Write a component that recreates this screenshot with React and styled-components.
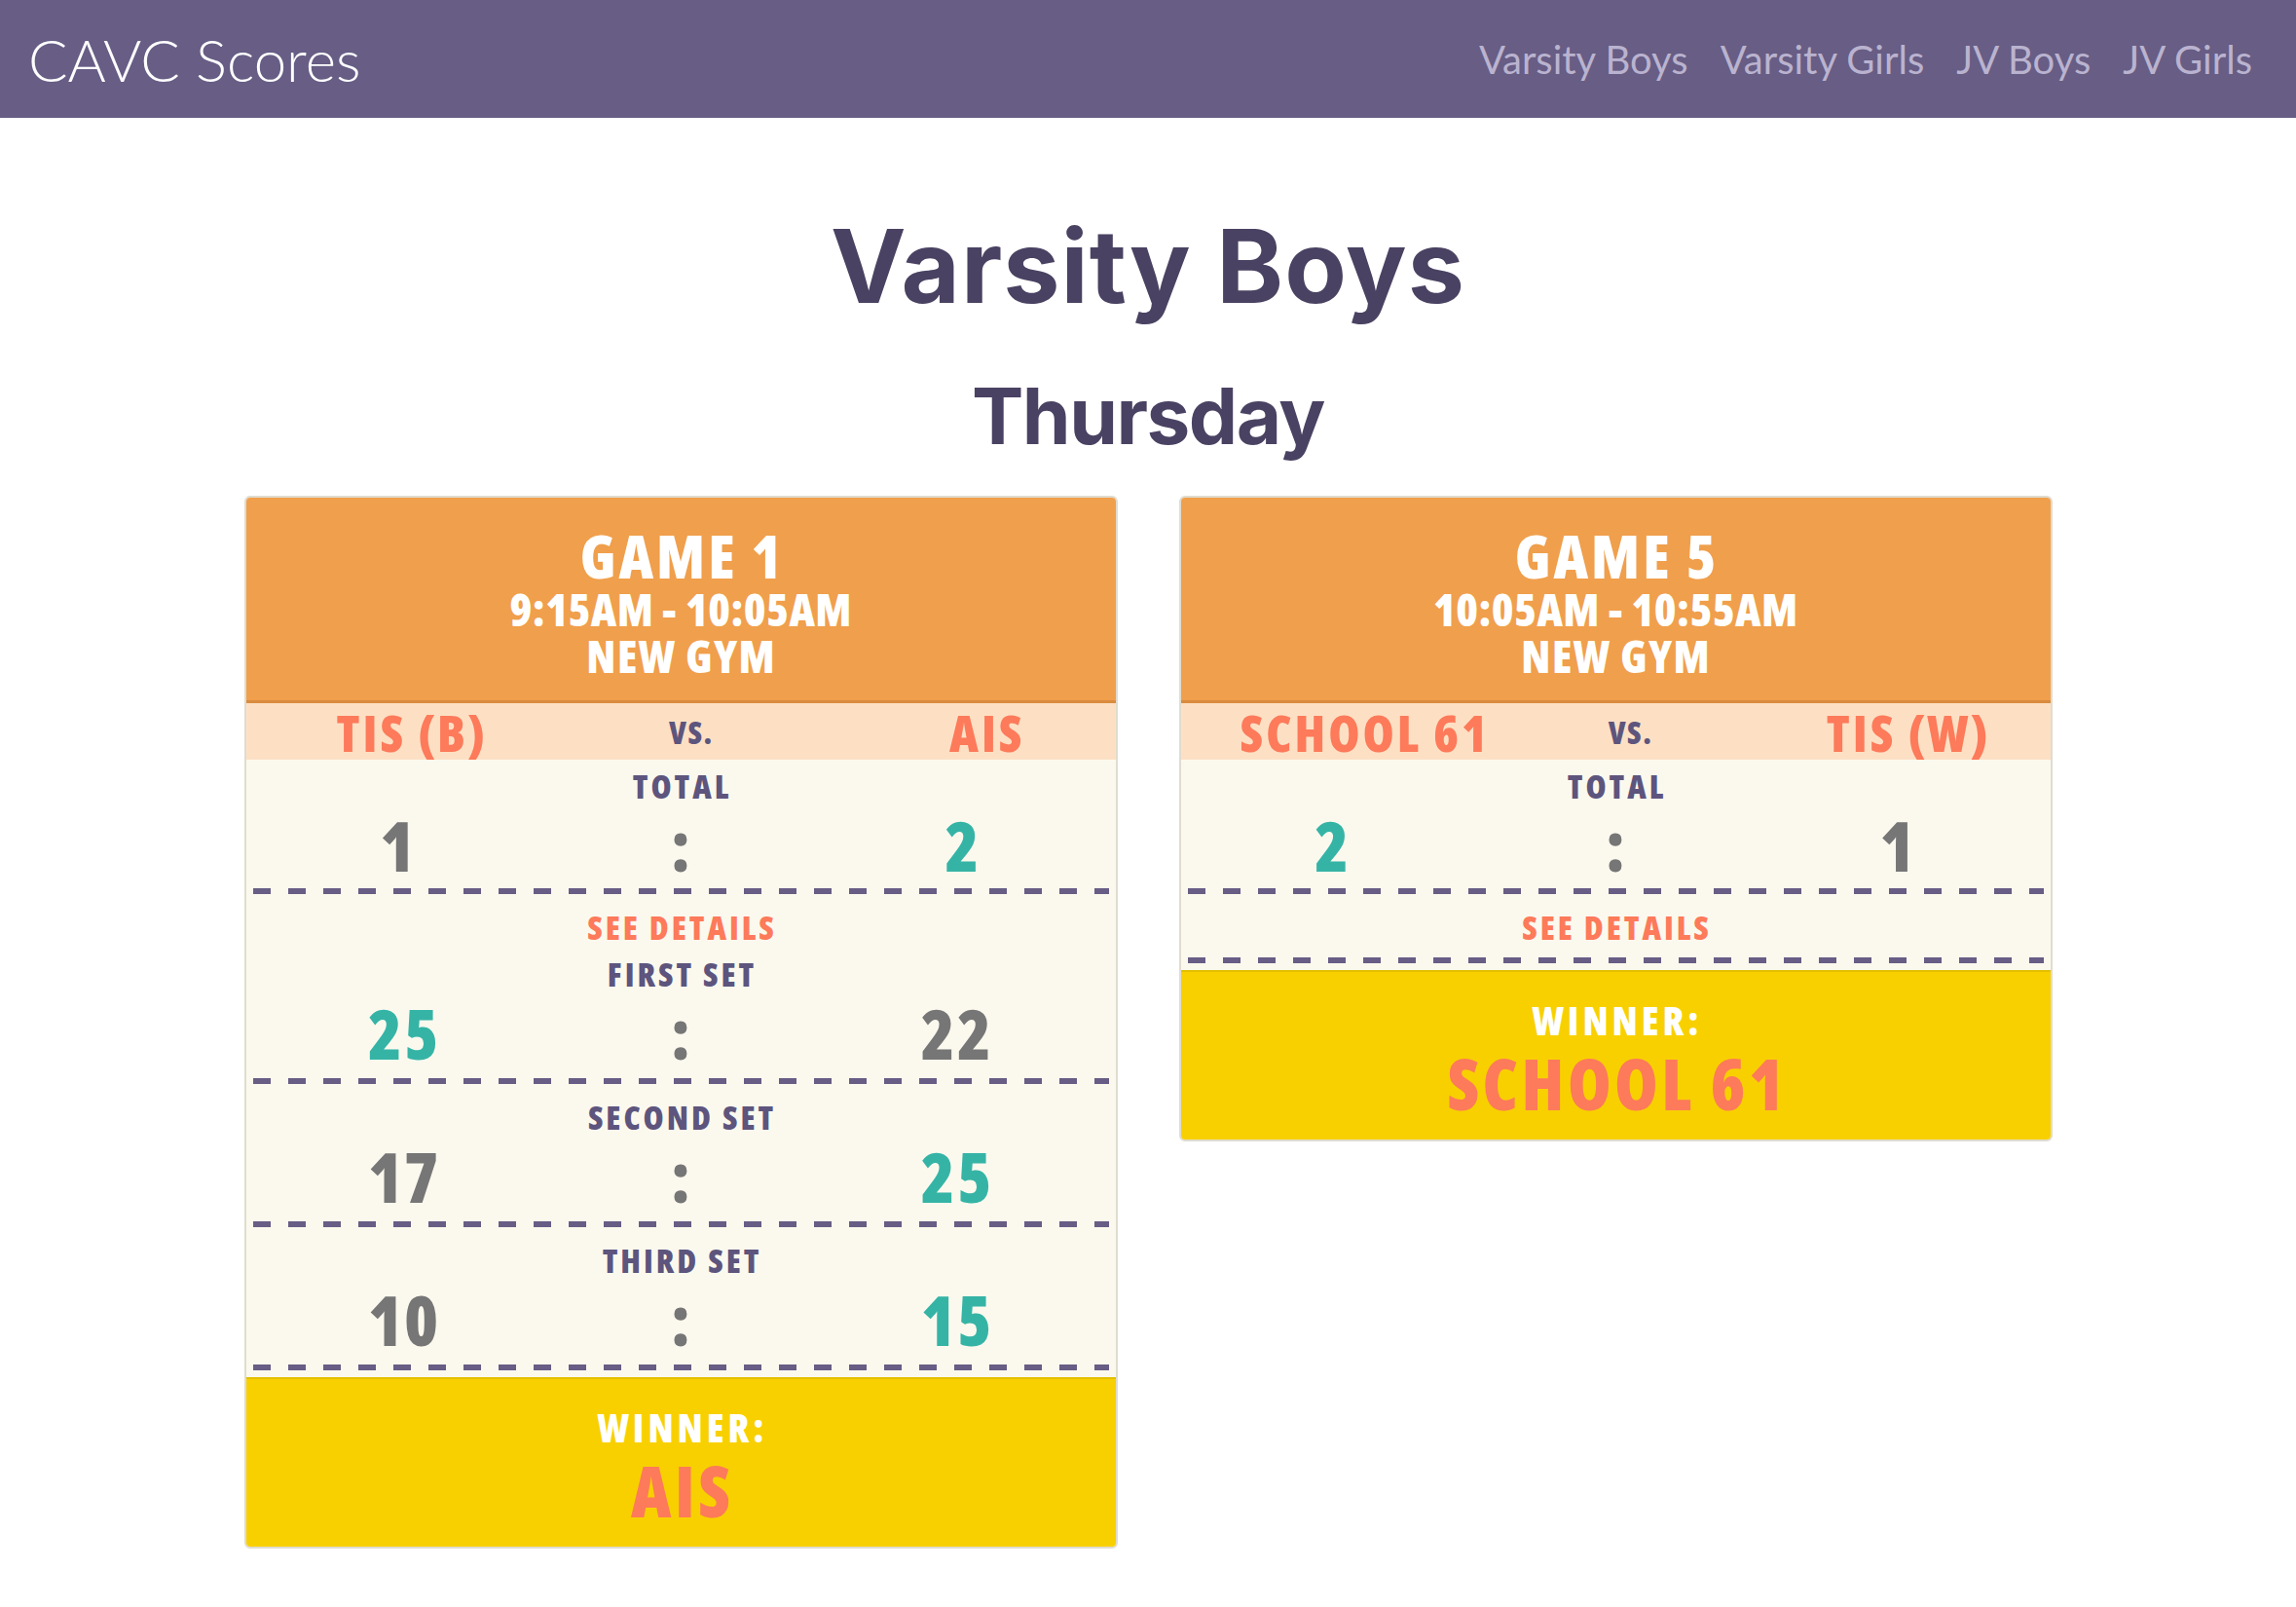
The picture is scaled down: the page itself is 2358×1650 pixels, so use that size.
import React from 'react'
import styled, { createGlobalStyle, css } from 'styled-components'

const GlobalStyle = createGlobalStyle`
  body {
    margin: 0;
    background: #ffffff;
    font-family: "Lato", "Liberation Sans", sans-serif;
  }
`

const games = [
  {
    title: 'GAME 1',
    time: '9:15AM - 10:05AM',
    place: 'NEW GYM',
    home: 'TIS (B)',
    away: 'AIS',
    total: [1, 2],
    open: true,
    sets: [
      { name: 'FIRST SET', home: 25, away: 22 },
      { name: 'SECOND SET', home: 17, away: 25 },
      { name: 'THIRD SET', home: 10, away: 15 },
    ],
    winner: 'AIS',
  },
  {
    title: 'GAME 5',
    time: '10:05AM - 10:55AM',
    place: 'NEW GYM',
    home: 'SCHOOL 61',
    away: 'TIS (W)',
    total: [2, 1],
    open: false,
    sets: [],
    winner: 'SCHOOL 61',
  },
]

// dashed rule drawn as a background so the dash length matches (18px on, 18px off)
const dashed = css`
  background: repeating-linear-gradient(to right, #675d85 0 18px, transparent 18px 36px)
    left bottom / 100% 6px no-repeat;
`

// letter-spacing leaves a trailing gap, indent by the same amount to stay centred
const spaced = ls => css`
  letter-spacing: ${ls}px;
  text-indent: ${ls}px;
`

const Navbar = styled.nav`
  height: 121px;
  background: #675d85;
  display: flex;
  align-items: center;
  justify-content: space-between;
  padding: 0 45px 0 29px;
`

const Brand = styled.a`
  font-family: "Lato", sans-serif;
  font-weight: 300;
  font-size: 60px;
  color: #ffffff;
  text-decoration: none;
`

const NavLinks = styled.ul`
  display: flex;
  gap: 33px;
  list-style: none;
  margin: 0;
  padding: 0;
`

const NavLink = styled.a`
  font-family: "Lato", sans-serif;
  font-size: 40px;
  color: #bab3cf;
  text-decoration: none;
`

const Main = styled.main`
  text-align: center;
  padding-top: 88px;
`

const Title = styled.h1`
  margin: 0;
  font-family: "Inter", sans-serif;
  font-weight: 700;
  font-size: 104px;
  line-height: 128px;
  letter-spacing: 1px;
  color: #4a4262;
`

const Day = styled.h2`
  margin: 40px 0 0;
  font-family: "Inter", sans-serif;
  font-weight: 700;
  font-size: 80px;
  line-height: 100px;
  letter-spacing: -1.5px;
  color: #4a4262;
`

const Cards = styled.div`
  display: grid;
  grid-template-columns: repeat(2, 897px);
  column-gap: 63px;
  justify-content: center;
  align-items: start;
  margin-top: 32px;
  padding-bottom: 60px;
`

const Card = styled.div`
  border: 2px solid #e0dccf;
  border-radius: 6px;
  overflow: hidden;
  font-family: "Open Sans", sans-serif;
  font-stretch: 75%;
  font-weight: 800;
  text-transform: uppercase;
`

const Header = styled.div`
  background: #f09f4c;
  border-bottom: 3px solid #d98b3e;
  padding: 28px 0 22px;
  color: #ffffff;
`

const GameTitle = styled.div`
  font-size: 62px;
  line-height: 62px;
  ${spaced(3)}
`

const HeaderLine = styled.div`
  font-size: 46px;
  line-height: 48px;
  ${p => spaced(p.$ls)}
`

const Teams = styled.div`
  height: 58px;
  background: #fde0c4;
  display: flex;
  align-items: center;
  justify-content: space-around;
`

const Team = styled.span`
  font-size: 52px;
  letter-spacing: 3px;
  color: #fd7a5a;
`

const Versus = styled.span`
  width: 102px;
  text-align: left;
  font-size: 32px;
  letter-spacing: 1.5px;
  color: #5d557d;
`

const Body = styled.div`
  background: #fbf9ee;
  padding-bottom: 7px;
`

const Section = styled.div`
  margin: 0 7px;
  padding: ${p => p.$top}px 0 ${p => p.$bottom + 6}px;
  ${dashed}
`

const Label = styled.div`
  font-size: 34px;
  line-height: 48px;
  ${spaced(3)}
  color: ${p => (p.$link ? '#fd7a5a' : '#5d557d')};
  cursor: ${p => (p.$link ? 'pointer' : 'default')};
`

const ScoreRow = styled.div`
  display: flex;
  justify-content: space-around;
  font-size: 71px;
  line-height: 73px;
  color: #777676;
`

const Score = styled.span`
  letter-spacing: 2px;
  color: ${p => (p.$win ? '#35b4a6' : '#777676')};
`

const SetRow = styled.div`
  padding: 0 0 16px;
  ${dashed}
  & + & {
    padding-top: 10px;
  }
  &:last-child {
    padding-bottom: 10px;
    background: none;
  }
`

const Winner = styled.div`
  background: #f8d000;
  border-top: 2px solid #e4bf00;
  padding: 26px 0 18px;
`

const WinnerLabel = styled.div`
  font-size: 40px;
  line-height: 48px;
  ${spaced(4)}
  color: #ffffff;
`

const WinnerName = styled.div`
  font-size: 72px;
  line-height: 80px;
  ${spaced(3.5)}
  color: #fd7a5a;
`

function Scores({ home, away }) {
  return (
    <ScoreRow>
      <Score $win={home > away}>{home}</Score>
      <span>:</span>
      <Score $win={away > home}>{away}</Score>
    </ScoreRow>
  )
}

function GameCard({ game }) {
  return (
    <Card>
      <Header>
        <GameTitle>{game.title}</GameTitle>
        <HeaderLine $ls={0.5}>{game.time}</HeaderLine>
        <HeaderLine $ls={1.5}>{game.place}</HeaderLine>
      </Header>
      <Teams>
        <Team>{game.home}</Team>
        <Versus>vs.</Versus>
        <Team>{game.away}</Team>
      </Teams>
      <Body>
        <Section $top={3} $bottom={8}>
          <Label>Total</Label>
          <Scores home={game.total[0]} away={game.total[1]} />
        </Section>
        <Section $top={10} $bottom={game.open ? 0 : 7}>
          <Label $link>See details</Label>
          {game.open && (
            <div>
              {game.sets.map(s => (
                <SetRow key={s.name}>
                  <Label>{s.name}</Label>
                  <Scores home={s.home} away={s.away} />
                </SetRow>
              ))}
            </div>
          )}
        </Section>
      </Body>
      <Winner>
        <WinnerLabel>Winner:</WinnerLabel>
        <WinnerName>{game.winner}</WinnerName>
      </Winner>
    </Card>
  )
}

function App() {
  return (
    <>
      <GlobalStyle />
      <Navbar>
        <Brand href="#">CAVC Scores</Brand>
        <NavLinks>
          <li><NavLink href="#">Varsity Boys</NavLink></li>
          <li><NavLink href="#">Varsity Girls</NavLink></li>
          <li><NavLink href="#">JV Boys</NavLink></li>
          <li><NavLink href="#">JV Girls</NavLink></li>
        </NavLinks>
      </Navbar>
      <Main>
        <Title>Varsity Boys</Title>
        <Day>Thursday</Day>
        <Cards>
          {games.map(g => (
            <GameCard key={g.title} game={g} />
          ))}
        </Cards>
      </Main>
    </>
  )
}

export default App
